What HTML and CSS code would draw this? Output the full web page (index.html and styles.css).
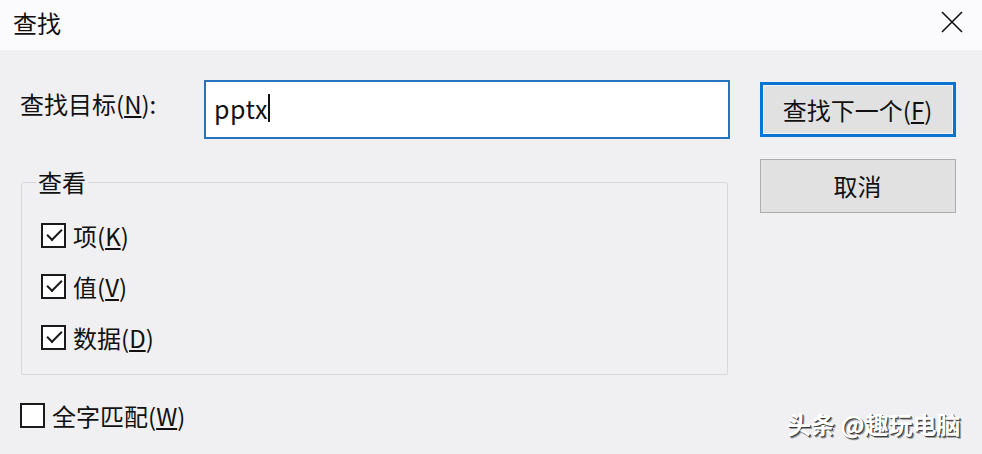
FILE: index.html
```html
<!DOCTYPE html>
<html>
<head>
<meta charset="utf-8">
<title>查找</title>
<link rel="stylesheet" href="styles.css">
</head>
<body>
<div class="dialog">
  <div class="titlebar">
    <span class="title">查找</span>
    <svg class="close" width="22" height="22" viewBox="0 0 22 22"><path d="M1 1L21 21M21 1L1 21" stroke="#111" stroke-width="1.6" fill="none"/></svg>
  </div>
  <div class="content">
    <div class="left">
      <div class="findrow">
        <label class="findlabel">查找目标(<u>N</u>):</label>
        <div class="input"><span>pptx</span><i class="caret"></i></div>
      </div>
      <fieldset class="group">
        <legend>查看</legend>
        <div class="check"><span class="box on"></span>项(<u>K</u>)</div>
        <div class="check"><span class="box on"></span>值(<u>V</u>)</div>
        <div class="check"><span class="box on"></span>数据(<u>D</u>)</div>
      </fieldset>
      <div class="check whole"><span class="box"></span>全字匹配(<u>W</u>)</div>
    </div>
    <div class="right">
      <div class="btn focus">查找下一个(<u>F</u>)</div>
      <div class="btn">取消</div>
    </div>
  </div>
  <div class="mark">头条 @趣玩电脑</div>
</div>
</body>
</html>
```

FILE: styles.css
```css
html,body{margin:0;padding:0;}
body{width:982px;height:454px;overflow:hidden;background:#f0eff1;font-family:"Noto Sans CJK SC","Liberation Sans",sans-serif;font-size:24px;color:#111;}
.dialog{position:relative;width:982px;height:454px;}
.titlebar{height:50px;background:#fbfafc;display:flex;align-items:center;justify-content:space-between;padding:0 19px 0 13px;box-sizing:border-box;}
.title{line-height:26px;margin-top:-4px;}
.close{margin-top:-6px;}
.content{display:flex;padding:30px 0 0 20px;}
.left{width:710px;}
.right{margin-left:29px;width:197px;display:flex;flex-direction:column;align-items:center;padding-top:2px;}
.findrow{display:flex;align-items:center;height:59px;}
.findlabel{width:184px;margin-top:-12px;line-height:26px;}
.input{width:526px;height:59px;box-sizing:border-box;border:2px solid #2574bd;background:#fff;display:flex;align-items:center;padding-left:8px;}
.input span{font-size:25px;line-height:26px;margin-top:-4px;letter-spacing:0.5px;}
.caret{display:block;width:2px;height:28px;background:#111;margin-top:-4px;}
.group{margin:30px 0 0 1px;padding:0 0 24px 14px;border:1px solid #d8d7d9;border-radius:2px;width:707px;box-sizing:border-box;}
.group legend{padding:0 2px;line-height:26px;}
.check{display:flex;align-items:center;height:25px;line-height:25px;margin:18px 0 0 5px;}
.group .check + .check{margin-top:26px;}
.group .check:first-of-type{margin-top:28px;}
.box{flex:none;width:25px;height:25px;box-sizing:border-box;border:2px solid #1a1a1a;background:#fff;margin-right:7px;position:relative;}
.box.on::after{content:"";position:absolute;left:4px;top:4px;width:13px;height:6px;border-left:2px solid #1a1a1a;border-bottom:2px solid #1a1a1a;transform:rotate(-45deg);}
.whole{margin:28px 0 0 0;}
.btn{width:196px;height:54px;box-sizing:border-box;border:1px solid #adadad;background:#e1e1e1;display:flex;align-items:center;justify-content:center;line-height:26px;}
.btn.focus{border:3px solid #0a74d2;height:55px;box-shadow:inset 0 0 0 1px #f4f4f4;margin-bottom:22px;}
.mark{position:absolute;left:787px;top:410px;color:#fff;font-size:24px;font-weight:bold;line-height:28px;text-shadow:1px 1px 0 #3a3a3a,2px 2px 0 #9a9a9a;}
```
